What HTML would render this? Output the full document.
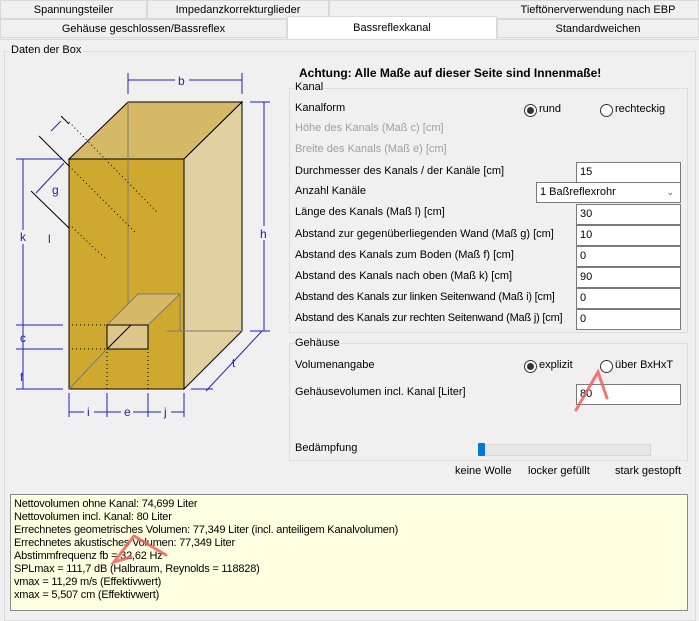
<!DOCTYPE html>
<html><head><meta charset="utf-8"><style>
*{box-sizing:border-box;margin:0;padding:0}
body{width:699px;height:615px;background:#f0f0f0;font-family:"Liberation Sans",sans-serif;font-size:11px;color:#000;position:relative;overflow:hidden}
.a{position:absolute;white-space:nowrap}
.tab{position:absolute;height:19px;border:1px solid #d9d9d9;background:#f0f0f0;text-align:center;line-height:18px;font-size:11px}
.inp{position:absolute;background:#fff;border:1px solid #7a7a7a;height:21px;padding-left:3px;line-height:19px}
.gb{position:absolute;border:1px solid #dcdcdc}
.dis{color:#a0a0a0}
.rad{position:absolute;width:13px;height:13px;border:1px solid #333;border-radius:50%;background:#fff}
.rad.on::after{content:"";position:absolute;left:2px;top:2px;width:7px;height:7px;border-radius:50%;background:#333}
</style></head><body>
<div class="tab" style="left:0;top:0;width:147px">Spannungsteiler</div>
<div class="tab" style="left:147px;top:0;width:182px">Impedanzkorrekturglieder</div>
<div class="tab" style="left:329px;top:0;width:370px;padding-left:168px">Tieftönerverwendung nach EBP</div>
<div class="tab" style="left:0;top:19px;width:287px">Gehäuse geschlossen/Bassreflex</div>
<div class="tab" style="left:497px;top:19px;width:202px">Standardweichen</div>
<div class="tab" style="left:287px;top:16px;width:210px;height:24px;background:#fff;border-bottom:none;line-height:22px">Bassreflexkanal</div>
<div class="a" style="left:0;top:39px;width:699px;height:1px;background:#d9d9d9"></div>
<div class="gb" style="left:4px;top:51px;width:692px;height:570px"></div>
<div class="a" style="left:9px;top:44px;background:#f0f0f0;padding:0 2px">Daten der Box</div>

<svg class="a" style="left:0;top:0" width="290" height="430">
<g stroke="#000" stroke-width="1">
<polygon points="69,159 128,102 242,102 184,159" fill="#d6b966"/>
<polygon points="184,159 242,102 242,331 184,389" fill="#e1d0a0"/>
<rect x="69" y="159" width="115" height="230" fill="#cfa830"/>
</g>
<g stroke="#7a7a7a" fill="none"><line x1="128" y1="102" x2="128" y2="331"/><line x1="167" y1="331" x2="242" y2="331"/>
<polyline points="138,294 180,294 180,331"/><line x1="69" y1="389" x2="107" y2="349"/></g>
<polygon points="107,325 138,294 180,294 148,325" fill="#d6b966" stroke="#7a7a7a"/>
<rect x="107" y="325" width="41" height="24" fill="#ddc68a" stroke="#000"/>
<line x1="107" y1="349" x2="131" y2="325" stroke="#000"/>
<g stroke="#000" stroke-dasharray="1,3"><line x1="69" y1="122" x2="157" y2="212"/><line x1="69" y1="166" x2="136" y2="233"/><line x1="72" y1="227" x2="107" y2="260"/>
<line x1="72" y1="325" x2="107" y2="325"/><line x1="72" y1="349" x2="107" y2="349"/><line x1="107" y1="352" x2="107" y2="389"/><line x1="148" y1="352" x2="148" y2="389"/></g>
<g stroke="#000"><line x1="61" y1="116" x2="69" y2="124"/><line x1="39" y1="136" x2="69" y2="166"/><line x1="31" y1="191" x2="69" y2="228"/></g>
<g stroke="#2020c0" fill="none">
<line x1="128" y1="80" x2="242" y2="80"/><line x1="128" y1="73" x2="128" y2="94"/><line x1="242" y1="73" x2="242" y2="94"/>
<line x1="264" y1="102" x2="264" y2="331"/><line x1="250" y1="102" x2="270" y2="102"/><line x1="250" y1="331" x2="270" y2="331"/>
<line x1="23" y1="159" x2="23" y2="389"/><line x1="16" y1="159" x2="63" y2="159"/><line x1="16" y1="325" x2="63" y2="325"/><line x1="16" y1="349" x2="63" y2="349"/><line x1="16" y1="389" x2="63" y2="389"/>
<line x1="69" y1="412" x2="184" y2="412"/><line x1="69" y1="393" x2="69" y2="417"/><line x1="107" y1="393" x2="107" y2="417"/><line x1="148" y1="393" x2="148" y2="417"/><line x1="184" y1="393" x2="184" y2="417"/>
<line x1="206" y1="391" x2="262" y2="331"/><line x1="191" y1="389" x2="213" y2="389"/>
<line x1="61" y1="121" x2="51" y2="131"/><line x1="64" y1="163" x2="36" y2="193"/>
</g>
<g fill="#2020c0" font-family="Liberation Sans" font-size="12">
<rect x="175" y="73" width="14" height="14" fill="#f0f0f0"/><text x="178" y="85">b</text>
<rect x="258" y="226" width="12" height="14" fill="#f0f0f0"/><text x="260" y="238">h</text>
<rect x="18" y="230" width="12" height="14" fill="#f0f0f0"/><text x="20" y="241">k</text>
<text x="20" y="342">c</text><text x="20" y="381">f</text>
<text x="52" y="194">g</text><text x="48" y="243">l</text><text x="232" y="367">t</text>
<rect x="84" y="405" width="10" height="14" fill="#f0f0f0"/><text x="87" y="416">i</text>
<rect x="121" y="405" width="12" height="14" fill="#f0f0f0"/><text x="124" y="416">e</text>
<rect x="161" y="405" width="10" height="14" fill="#f0f0f0"/><text x="164" y="416">j</text>
</g></svg>

<div class="a" style="left:299px;top:66px;font-weight:bold;font-size:12px">Achtung: Alle Maße auf dieser Seite sind Innenmaße!</div>
<div class="gb" style="left:289px;top:88px;width:399px;height:245px"></div>
<div class="a" style="left:295px;top:81px;background:#f0f0f0">Kanal</div>
<div class="a" style="left:295px;top:102px">Kanalform</div>
<div class="rad on" style="left:524px;top:104px"></div><div class="a" style="left:539px;top:103px">rund</div>
<div class="rad" style="left:600px;top:104px"></div><div class="a" style="left:615px;top:103px">rechteckig</div>
<div class="a dis" style="left:295px;top:122px">Höhe des Kanals (Maß c) [cm]</div>
<div class="a dis" style="left:295px;top:143px">Breite des Kanals (Maß e) [cm]</div>
<div class="a" style="left:295px;top:165px">Durchmesser des Kanals / der Kanäle [cm]</div>
<div class="inp" style="left:576px;top:162px;width:105px">15</div>
<div class="a" style="left:295px;top:185px">Anzahl Kanäle</div>
<div class="inp" style="left:536px;top:182px;width:145px">1 Baßreflexrohr<span style="position:absolute;right:6px;top:0;font-size:9px;color:#555">&#8964;</span></div>
<div class="a" style="left:295px;top:206px">Länge des Kanals (Maß l) [cm]</div>
<div class="inp" style="left:576px;top:204px;width:105px">30</div>
<div class="a" style="left:295px;top:228px">Abstand zur gegenüberliegenden Wand (Maß g) [cm]</div>
<div class="inp" style="left:576px;top:225px;width:105px">10</div>
<div class="a" style="left:295px;top:249px">Abstand des Kanals zum Boden (Maß f) [cm]</div>
<div class="inp" style="left:576px;top:246px;width:105px">0</div>
<div class="a" style="left:295px;top:270px">Abstand des Kanals nach oben (Maß k) [cm]</div>
<div class="inp" style="left:576px;top:267px;width:105px">90</div>
<div class="a" style="left:295px;top:291px;letter-spacing:-0.2px">Abstand des Kanals zur linken Seitenwand (Maß i) [cm]</div>
<div class="inp" style="left:576px;top:288px;width:105px">0</div>
<div class="a" style="left:295px;top:312px;letter-spacing:-0.2px">Abstand des Kanals zur rechten Seitenwand (Maß j) [cm]</div>
<div class="inp" style="left:576px;top:309px;width:105px">0</div>

<div class="gb" style="left:289px;top:343px;width:399px;height:118px"></div>
<div class="a" style="left:295px;top:337px;background:#f0f0f0">Gehäuse</div>
<div class="a" style="left:295px;top:359px">Volumenangabe</div>
<div class="rad on" style="left:524px;top:360px"></div><div class="a" style="left:539px;top:359px">explizit</div>
<div class="rad" style="left:600px;top:360px"></div><div class="a" style="left:615px;top:359px">über BxHxT</div>
<div class="a" style="left:295px;top:386px">Gehäusevolumen incl. Kanal [Liter]</div>
<div class="inp" style="left:576px;top:384px;width:105px">80</div>
<div class="a" style="left:295px;top:442px">Bedämpfung</div>
<div class="a" style="left:478px;top:444px;width:173px;height:12px;background:#e6e6e6;border:1px solid #d6d6d6"></div>
<div class="a" style="left:478px;top:443px;width:7px;height:13px;background:#0078d7;border-radius:1px"></div>
<div class="a" style="left:455px;top:465px">keine Wolle</div>
<div class="a" style="left:528px;top:465px">locker gefüllt</div>
<div class="a" style="left:615px;top:465px">stark gestopft</div>

<div class="a" style="left:10px;top:494px;width:678px;height:117px;background:#ffffe1;border:1px solid #8a8a8a;padding:3px 3px;line-height:13px;font-size:11px;letter-spacing:-0.2px">
Nettovolumen ohne Kanal: 74,699 Liter<br>Nettovolumen incl. Kanal: 80 Liter<br>Errechnetes geometrisches Volumen: 77,349 Liter (incl. anteiligem Kanalvolumen)<br>Errechnetes akustisches Volumen: 77,349 Liter<br>Abstimmfrequenz fb = 32,62 Hz<br>SPLmax = 111,7 dB (Halbraum, Reynolds = 118828)<br>vmax = 11,29 m/s (Effektivwert)<br>xmax = 5,507 cm (Effektivwert)</div>

<svg class="a" style="left:0;top:0;pointer-events:none" width="699" height="615">
<g stroke="#f06060" stroke-width="3" fill="none" stroke-linecap="round" opacity="0.85">
<polyline points="607,398 598,372 576,410"/>
<polyline points="131,557 114,562 134,536 166,555"/>
</g></svg>
</body></html>
